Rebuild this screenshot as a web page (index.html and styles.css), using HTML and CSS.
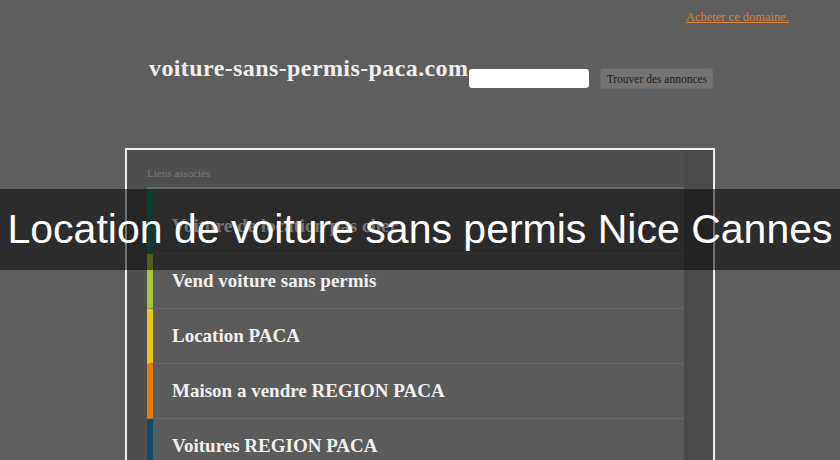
FILE: index.html
```html
<!DOCTYPE html>
<html lang="fr">
<head>
    <meta charset="UTF-8">
    <title>voiture-sans-permis-paca.com</title>
    <link rel="stylesheet" href="styles.css">
</head>
<body>
    <div class="page">
        <div class="top-bar">
            <a href="#" class="buy-link">Acheter ce domaine.</a>
        </div>
        <div class="header">
            <div class="site-name">voiture-sans-permis-paca.com</div>
            <input type="text" class="search-input">
            <button class="search-button">Trouver des annonces</button>
        </div>
        <div class="links-box">
            <div class="links-label">Liens associés</div>
            <ul class="links-list">
                <li class="teal first">Voiture de location pas cher</li>
                <li class="lime">Vend voiture sans permis</li>
                <li class="yellow">Location PACA</li>
                <li class="orange">Maison a vendre REGION PACA</li>
                <li class="blue">Voitures REGION PACA</li>
            </ul>
        </div>
    </div>
    <div class="banner">Location de voiture sans permis Nice Cannes</div>
</body>
</html>
```

FILE: styles.css
```css
html, body {
    margin: 0;
    padding: 0;
}

body {
    background-color: #5e5e5e;
    font-family: "Liberation Serif", serif;
    height: 460px;
    overflow: hidden;
    position: relative;
}

.top-bar {
    display: flex;
    justify-content: flex-end;
    padding: 10px 51px 0 0;
    height: 16px;
}

.buy-link {
    font-size: 12.5px;
    color: #d9823a;
    text-decoration: underline;
}

.header {
    display: flex;
    align-items: flex-start;
    padding-left: 149px;
    margin-top: 28px;
    height: 45px;
}

.site-name {
    color: #eeeeee;
    font-size: 24px;
    font-weight: bold;
    letter-spacing: 0.4px;
    line-height: 28px;
}

.search-input {
    width: 120px;
    height: 19px;
    box-sizing: border-box;
    border: none;
    border-radius: 3px;
    background-color: #ffffff;
    margin: 15px 0 0 1px;
    padding: 0;
}

.search-button {
    margin: 14px 0 0 11px;
    width: 113px;
    height: 21px;
    background-color: #737373;
    border: 1px solid #6a6a6a;
    border-radius: 2px;
    color: #1e1e1e;
    font-family: "Liberation Serif", serif;
    font-size: 11.5px;
    padding: 0;
}

.links-box {
    margin: 49px 0 0 125px;
    width: 537px;
    height: 311px;
    overflow: hidden;
    border: 2px solid #f0f0f0;
    border-bottom: none;
    padding: 0 29px 0 20px;
    background: linear-gradient(to right, #4f4f4f 0, #4f4f4f 557px, #4a4a4a 557px);
}

.links-label {
    color: #7b7b7b;
    font-size: 11px;
    padding-top: 17px;
    height: 20px;
    border-bottom: 2px solid #666666;
}

.links-list {
    list-style: none;
    margin: 0;
    padding: 0;
}

.links-list li {
    height: 54px;
    border-bottom: 1px solid #6b6b6b;
    background-color: #5b5b5b;
    display: flex;
    align-items: center;
    padding-left: 19px;
    border-left: 6px solid #888888;
    color: #f0f0f0;
    font-size: 19px;
    font-weight: bold;
}

.links-list li.first {
    height: 54px;
    padding-top: 10px;
}

.links-list li.teal { border-left-color: #1e7a63; }
.links-list li.lime { border-left-color: #a7c43b; }
.links-list li.yellow { border-left-color: #e8c71b; }
.links-list li.orange { border-left-color: #e7790f; }
.links-list li.blue { border-left-color: #0e4b6b; }

.banner {
    position: absolute;
    left: 0;
    right: 0;
    top: 189px;
    height: 81px;
    background-color: rgba(0, 0, 0, 0.52);
    color: #ffffff;
    font-family: "Liberation Sans", Arial, sans-serif;
    font-size: 41px;
    line-height: 81px;
    text-align: center;
    white-space: nowrap;
}
```
